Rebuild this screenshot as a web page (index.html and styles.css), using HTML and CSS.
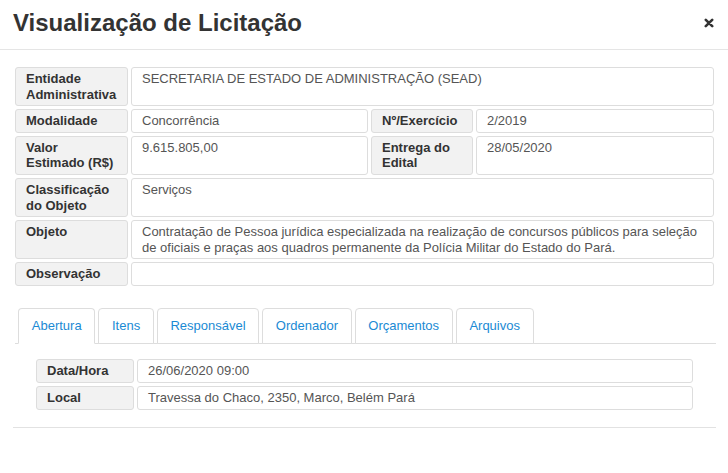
FILE: index.html
```html
<!DOCTYPE html>
<html lang="pt-BR">
<head>
<meta charset="utf-8">
<title>Visualização de Licitação</title>
<link rel="stylesheet" href="styles.css">
</head>
<body>
<div class="modal">
  <div class="modal-header">
    <h4 class="modal-title">Visualização de Licitação</h4>
    <button class="close" type="button" aria-label="Fechar">
      <svg width="10" height="10" viewBox="0 0 10 10"><path d="M1.8 1.8 L8.2 8.2 M8.2 1.8 L1.8 8.2" stroke="#333" stroke-width="2.6" stroke-linecap="round" fill="none"/></svg>
    </button>
  </div>
  <div class="modal-body">
    <div class="fields">
      <div class="lbl">Entidade Administrativa</div>
      <div class="val wide">SECRETARIA DE ESTADO DE ADMINISTRAÇÃO (SEAD)</div>

      <div class="lbl">Modalidade</div>
      <div class="val">Concorrência</div>
      <div class="lbl">Nº/Exercício</div>
      <div class="val">2/2019</div>

      <div class="lbl">Valor Estimado (R$)</div>
      <div class="val">9.615.805,00</div>
      <div class="lbl">Entrega do Edital</div>
      <div class="val">28/05/2020</div>

      <div class="lbl">Classificação do Objeto</div>
      <div class="val wide">Serviços</div>

      <div class="lbl">Objeto</div>
      <div class="val wide">Contratação de Pessoa jurídica especializada na realização de concursos públicos para seleção de oficiais e praças aos quadros permanente da Polícia Militar do Estado do Pará.</div>

      <div class="lbl">Observação</div>
      <div class="val wide"></div>
    </div>

    <ul class="tabs">
      <li class="tab active"><a href="#">Abertura</a></li>
      <li class="tab"><a href="#">Itens</a></li>
      <li class="tab"><a href="#">Responsável</a></li>
      <li class="tab"><a href="#">Ordenador</a></li>
      <li class="tab"><a href="#">Orçamentos</a></li>
      <li class="tab"><a href="#">Arquivos</a></li>
    </ul>

    <div class="tab-pane">
      <div class="lbl">Data/Hora</div>
      <div class="val">26/06/2020 09:00</div>
      <div class="lbl">Local</div>
      <div class="val">Travessa do Chaco, 2350, Marco, Belém Pará</div>
    </div>

    <div class="divider"></div>
  </div>
</div>
</body>
</html>
```
FILE: styles.css
```css
* { box-sizing: border-box; }
html, body {
  margin: 0;
  padding: 0;
  background: #fff;
}
body {
  font-family: "Liberation Sans", Arial, sans-serif;
  font-size: 13px;
  color: #333;
}
.modal {
  width: 728px;
}
.modal-header {
  display: flex;
  align-items: flex-start;
  justify-content: space-between;
  height: 50px;
  padding: 10px 14px 0 13px;
  border-bottom: 1px solid #e5e5e5;
}
.modal-title {
  margin: 0;
  font-size: 24px;
  line-height: 26px;
  font-weight: bold;
  color: #333;
}
.close {
  border: 0;
  background: none;
  padding: 0;
  margin-top: 8px;
  width: 10px;
  height: 10px;
  cursor: pointer;
  display: block;
}
.close svg { display: block; }
.modal-body {
  padding: 17px 0 0 0;
}
.fields {
  display: grid;
  grid-template-columns: 113px 237px 102px 238px;
  gap: 3px;
  margin-left: 15px;
}
.lbl, .val {
  border: 1px solid #ddd;
  border-radius: 3px;
  padding: 3px 10px;
  line-height: 1.2;
  min-height: 23.6px;
}
.lbl {
  background: #f2f2f2;
  font-weight: bold;
  color: #333;
}
.val {
  background: #fff;
  color: #555;
}
.wide {
  grid-column: 2 / 5;
}
.tabs {
  list-style: none;
  margin: 22px 12px 0 15px;
  padding: 0 0 0 3px;
  display: flex;
  gap: 2.7px;
  border-bottom: 1px solid #ddd;
}
.tab {
  margin-bottom: -1px;
}
.tab a {
  display: block;
  padding: 9px 12.8px;
  line-height: 16px;
  font-size: 13px;
  color: #1a8ad4;
  text-decoration: none;
  border: 1px solid #ddd;
  border-radius: 4px 4px 0 0;
  background: #fff;
}
.tab.active a {
  border-bottom-color: #fff;
}
.tab-pane {
  display: grid;
  grid-template-columns: 98px 556px;
  gap: 3px;
  margin: 15px 0 0 36px;
}
.tab-pane .lbl, .tab-pane .val {
  line-height: 16px;
  min-height: 24px;
}
.divider {
  margin: 17px 12px 0 13px;
  border-top: 1px solid #e2e2e2;
}
```
